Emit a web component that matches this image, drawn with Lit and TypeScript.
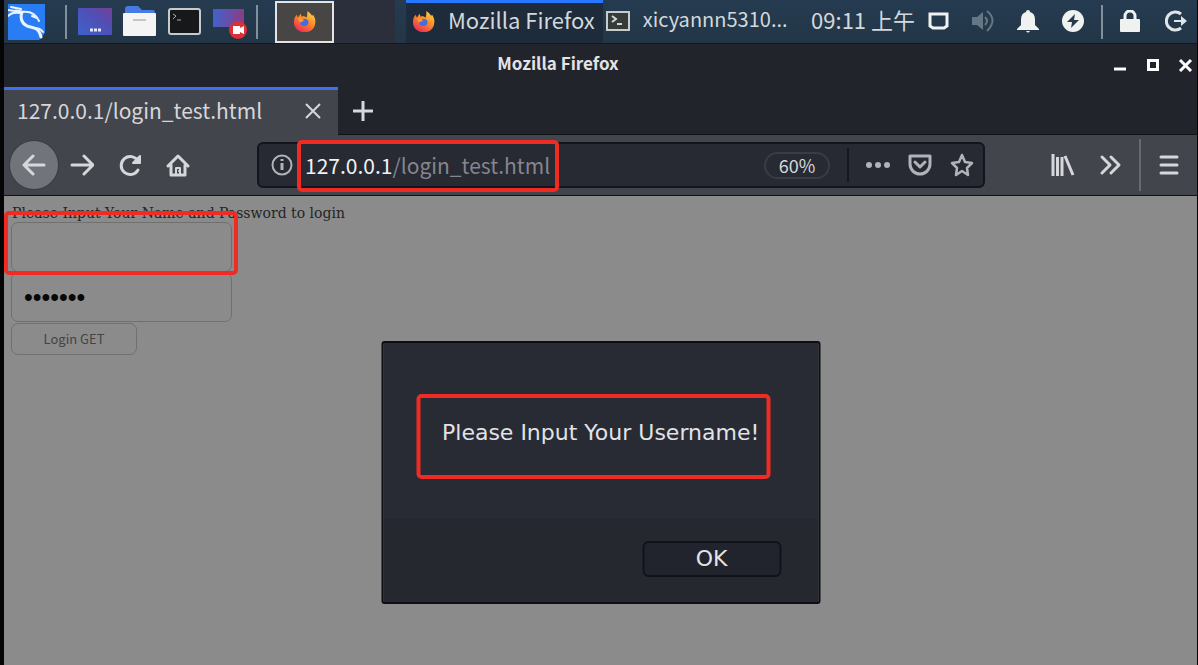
import { LitElement, html, css, svg } from "lit";
import { customElement } from "lit/decorators.js";

const firefoxLogo = html`<svg class="firefox" viewBox="0 0 24 24" aria-hidden="true">
  <defs>
    <linearGradient id="fx" x1=".85" y1="0" x2=".2" y2="1">
      <stop offset="0" stop-color="#ffd94a" /><stop offset=".45" stop-color="#ff8a26" />
      <stop offset="1" stop-color="#e8265c" />
    </linearGradient>
  </defs>
  <path fill="url(#fx)" d="M15 1c4 3 4 4 5 5l1-1c2 3 3 6 2 10-1 5-5 8-11 8C6 23 1 19 1 13c0-4 1-6 3-8l1 3 3-4 1 3c2-1 4 0 5 1 1-2 1-4 1-7z" />
  <path fill="#3f6fe0" d="M8 10c2 0 3-1 5-1 3 1 4 3 3 5-1 3-6 4-8 1-1-2-1-3 0-5z" />
  <path fill="#ff9a33" d="M5 8c2 0 4 1 7 3-2 0-2 2-5 2z" />
</svg>`;

const stroked = (paths: unknown, box = 24) => html`<svg class="icon" viewBox="0 0 ${box} ${box}"
  fill="none" stroke="currentColor" stroke-width="3" stroke-linecap="round" stroke-linejoin="round"
  aria-hidden="true">${paths}</svg>`;

@customElement("desktop-panel")
export class DesktopPanel extends LitElement {
  static styles = css`
    :host { display: block; }
    .panel {
      display: flex; align-items: center; justify-content: space-between; height: 43px;
      background: linear-gradient(#253b50, #233647);
      border-bottom: 1px solid #15171d;
      font: 22px/32px "Noto Sans CJK SC", sans-serif; color: #d3d8dc;
    }
    .launchers, .tray, .quick { display: flex; align-items: center; }
    .launchers { padding-left: 4px; }
    .quick { gap: 11px; margin: 0 9px 0 11px; }
    button { border: 0; padding: 0; background: none; color: inherit; font: inherit; display: flex; align-items: center; }
    .kali { width: 38px; height: 38px; margin-right: 19px; }
    .launch { width: 34px; height: 34px; }
    .rule { width: 2px; height: 34px; background: #81909b; }
    .active {
      width: 59px; height: 42px; margin-left: 17px; justify-content: center;
      background: #484644; border: 2px solid #e5e3e6; box-sizing: border-box;
    }
    .active + .spare { width: 61px; height: 43px; margin-right: 11px; background: #2b2e3b; }
    .firefox { width: 23px; height: 23px; flex: none; }
    .task { height: 43px; gap: 13px; padding: 0 8px 0 6px; box-sizing: border-box; white-space: nowrap; }
    .current { background: #1d2b3a; box-shadow: inset 0 3px #2777ff; }
    .idle { padding: 0 0 0 3px; font-size: 20px; }
    .task span, .clock { padding-bottom: 6px; }
    .term { width: 24px; height: 22px; }
    .tray { gap: 23px; padding-right: 10px; color: #f0f2f2; }
    .clock { color: #d3d8dc; margin-right: -11px; white-space: nowrap; }
    .tray svg { width: 22px; height: 24px; display: block; }
    .tray .rule { margin: 0 -6px; }
    .muted { color: #657785; }
  `;

  render() {
    return html`<nav class="panel" aria-label="Panel">
      <div class="launchers">
        <button aria-label="Applications">
          <svg class="kali" viewBox="0 0 38 38">
            <path fill="#287cf4" d="M0 1h37v29l-6 7H0z" />
            <g fill="none" stroke="#e9f3ff" stroke-linecap="round" stroke-linejoin="round">
              <path stroke-width="2" d="M3 4l10 2M0 7l7 1M0 13c3-3 7-4 12-3" />
              <path stroke-width="3" d="M8 8l6 1c-2 5-1 11 5 14 6 2 12 1 14 11" />
              <path stroke-width="2" d="M14 9c8-1 14 2 17 9M24 13l5 2M26 25c4 0 7 1 9 4" />
            </g>
          </svg>
        </button>
        <span class="rule"></span>
        <div class="quick">
          <button aria-label="Show desktop">
            <svg class="launch" viewBox="0 0 34 34">
              <defs><linearGradient id="dk" x1="0" y1="1" x2="1" y2="0"><stop stop-color="#3d62cc" /><stop offset=".6" stop-color="#514fb4" /><stop offset="1" stop-color="#75409a" /></linearGradient></defs>
              <rect y="3" width="34" height="27" rx="1" fill="url(#dk)" />
              <path d="M12 25h3M16 25h3M20 25h3" stroke="#e4e9ff" stroke-width="3" />
            </svg>
          </button>
          <button aria-label="Files">
            <svg class="launch" viewBox="0 0 34 34">
              <path fill="#467be4" d="M2 4q0-3 3-3h10l4 4h11q2 0 2 3v10H2z" />
              <rect y="8" width="33" height="23" rx="1" fill="#f4f4f5" />
              <path d="M10 15h13" stroke="#c5c5c7" stroke-width="2" />
            </svg>
          </button>
          <button aria-label="Terminal">
            <svg class="launch" viewBox="0 0 34 34">
              <rect x="1" y="4" width="31" height="25" rx="2" fill="#171819" stroke="#c5ccd1" stroke-width="2" />
              <path d="M5 9l3 2-3 3M9 15h4" fill="none" stroke="#a9adb0" />
            </svg>
          </button>
          <button aria-label="Screen recorder">
            <svg class="launch" viewBox="0 0 34 34">
              <defs><linearGradient id="rc"><stop stop-color="#4162cb" /><stop offset="1" stop-color="#8b3c85" /></linearGradient></defs>
              <path d="M0 4h31v18H0z" fill="url(#rc)" />
              <circle cx="25" cy="25" r="9" fill="#dc3036" />
              <path d="M20 21h7v2l4-2v8l-4-2v2h-7z" fill="#fff" />
            </svg>
          </button>
        </div>
        <span class="rule"></span>
        <button class="active" aria-label="Firefox">${firefoxLogo}</button>
        <span class="spare"></span>
        <button class="task current">${firefoxLogo}<span>Mozilla Firefox</span></button>
        <button class="task idle">
          <svg class="term" viewBox="0 0 24 22">
            <rect x="1" y="1" width="22" height="18" fill="#353c39" stroke="#c8ccca" stroke-width="2" />
            <path d="M6 5l4 3-4 3M11 13h5" fill="none" stroke="#d4d8d5" stroke-width="2" />
          </svg>
          <span>xicyannn5310...</span>
        </button>
      </div>
      <div class="tray">
        <time class="clock">09:11 上午</time>
        <button aria-label="Display">
          <svg viewBox="0 0 22 24"><path d="M3 4h17v12l-3 2H6l-3-2z" fill="none" stroke="currentColor" stroke-width="3" /></svg>
        </button>
        <button class="muted" aria-label="Volume">
          <svg viewBox="0 0 22 24"><path d="M0 7h5l6-5v18l-6-5H0z" fill="currentColor" /><path d="M13 7q4 4 0 8M15 1q11 9 0 20" fill="none" stroke="currentColor" stroke-width="2" /></svg>
        </button>
        <button aria-label="Notifications">
          <svg viewBox="0 0 22 24"><path d="M9 2q0-2 2-2t2 2q5 1 5 8v5l4 4v1H0v-1l4-4v-5q0-7 5-8zM9 21h4q-2 3-4 0z" fill="currentColor" /></svg>
        </button>
        <button aria-label="Power">
          <svg viewBox="0 0 22 24"><circle cx="11" cy="11" r="11" fill="currentColor" /><path d="M13 4l-8 8h5l-1 6 8-8h-5z" fill="#253b50" /></svg>
        </button>
        <span class="rule"></span>
        <button aria-label="Lock">
          <svg viewBox="0 0 22 24"><path d="M5 10V6a5 5 0 0 1 10 0v4" fill="none" stroke="currentColor" stroke-width="3" /><rect y="9" width="20" height="13" rx="1" fill="currentColor" /></svg>
        </button>
        <button aria-label="Log out">
          <svg viewBox="0 0 22 24"><path d="M16 4a9 9 0 1 0 0 14" fill="none" stroke="#dfe5e6" stroke-width="3" /><path d="M9 10h7V6l6 5-6 5v-4H9z" fill="#dfe5e6" /></svg>
        </button>
      </div>
    </nav>`;
  }
}

@customElement("browser-chrome")
export class BrowserChrome extends LitElement {
  static styles = css`
    :host { display: block; font-family: "Noto Sans CJK SC", sans-serif; color: #d5d7db; background: #22242c; }
    button { border: 0; padding: 0; margin: 0; background: none; color: inherit; font: inherit; display: grid; place-items: center; flex: none; }
    .title { display: flex; align-items: center; height: 43px; padding-right: 4px; }
    .title h1 { flex: 1; margin: 0; padding-bottom: 6px; text-align: center; font-size: 17px; line-height: 24px; font-weight: 700; color: #e2e3e5; }
    .controls { display: flex; gap: 18px; padding-bottom: 2px; color: #fff; }
    .controls svg { width: 15px; height: 15px; display: block; }
    .tabs { display: flex; height: 48px; box-sizing: border-box; }
    .tab {
      display: flex; align-items: center; justify-content: space-between; width: 334px; box-sizing: border-box;
      padding: 0 17px 0 13px; background: #43454d; border-top: 3px solid #3c72f2;
      font-size: 21px; line-height: 32px;
    }
    .tab span { padding-bottom: 6px; }
    .tab button { padding-bottom: 3px; }
    .tab svg { width: 16px; height: 16px; display: block; }
    .rest { flex: 1; display: flex; align-items: center; padding-left: 14px; border-bottom: 1px solid #101218; }
    .rest svg { width: 22px; height: 22px; display: block; }
    .bar {
      display: flex; align-items: center; height: 61px; box-sizing: border-box; padding: 0 16px 0 6px;
      background: #43454d; border-bottom: 1px solid #111216;
    }
    .nav { display: flex; align-items: center; gap: 24px; }
    .icon { width: 24px; height: 24px; display: block; }
    .back { width: 48px; height: 48px; border-radius: 50%; background: #72747b; margin-right: -12px; box-shadow: 0 0 0 1px #3a3c43; }
    .address {
      flex: 1; display: flex; align-items: center; height: 46px; box-sizing: border-box; min-width: 0;
      margin: 0 66px 0 67px; padding: 0 9px 0 12px;
      background: #272933; border: 2px solid #12141e; border-radius: 6px; color: #b1b3b9;
    }
    .info { width: 22px; height: 22px; }
    .where { position: relative; flex: 1; padding-left: 12px; font-size: 21px; line-height: 32px; white-space: nowrap; }
    .host { color: #f1f2f4; }
    .path { color: #85868e; }
    .mark { position: absolute; left: 4px; top: -9px; width: 262px; height: 52px; box-sizing: border-box; border: 4px solid #ef2b24; border-radius: 5px; pointer-events: none; }
    .zoom { width: 66px; height: 27px; box-sizing: border-box; border: 2px solid #3a3c45; border-radius: 14px; font-size: 18px; line-height: 22px; color: #d5d7db; }
    .split { width: 2px; height: 34px; margin: 0 17px; background: #151720; }
    .actions { display: flex; gap: 18px; }
    .tools { display: flex; align-items: center; gap: 24px; }
    .tools .line { width: 2px; height: 52px; margin: 0 -8px; background: #686a71; }
  `;

  render() {
    return html`
      <header class="title">
        <h1>Mozilla Firefox</h1>
        <div class="controls">
          <button aria-label="Minimize"><svg viewBox="0 0 15 15"><path d="M2 12h12" stroke="currentColor" stroke-width="3" /></svg></button>
          <button aria-label="Maximize"><svg viewBox="0 0 15 15"><path d="M3.500 3.500h9v9h-9z" fill="none" stroke="currentColor" stroke-width="3" /></svg></button>
          <button aria-label="Close"><svg viewBox="0 0 15 15"><path d="M2 3l11 11M13 3L2 14" stroke="currentColor" stroke-width="3" /></svg></button>
        </div>
      </header>
      <div class="tabs">
        <div class="tab"><span>127.0.0.1/login_test.html</span>
          <button aria-label="Close tab"><svg viewBox="0 0 16 16"><path d="M1 1l14 14M15 1L1 15" stroke="currentColor" stroke-width="2" /></svg></button>
        </div>
        <div class="rest"><button aria-label="New tab"><svg viewBox="0 0 22 22"><path d="M11 1v20M1 11h20" stroke="currentColor" stroke-width="3" /></svg></button></div>
      </div>
      <div class="bar">
        <div class="nav">
          <button class="back" aria-label="Back">${stroked(svg`<path d="M22 12H2M11 3l-9 9 9 9" />`)}</button>
          <button aria-label="Forward">${stroked(svg`<path d="M2 12h21M14 3l9 9-9 9" />`)}</button>
          <button aria-label="Reload">${stroked(svg`<path d="M20 17a9 9 0 1 1 0-9" /><path d="M22 3v7h-7z" fill="currentColor" stroke-width="2" />`)}</button>
          <button aria-label="Home">${stroked(svg`<path d="M2 13L12 3l10 10M5 12v10h14V12" /><path d="M10 21v-6h4v6" stroke-width="2" /><path d="M13 18h1" stroke-width="2" />`)}</button>
        </div>
        <div class="address">
          <svg class="info" viewBox="0 0 22 22" aria-hidden="true"><circle cx="11" cy="11" r="9.500" fill="none" stroke="currentColor" stroke-width="2" /><path d="M11 9v7M11 5v2" stroke="currentColor" stroke-width="3" /></svg>
          <div class="where"><span class="host">127.0.0.1</span><span class="path">/login_test.html</span><span class="mark"></span></div>
          <button class="zoom">60%</button>
          <span class="split"></span>
          <div class="actions">
            <button aria-label="Page actions"><svg class="icon" viewBox="0 0 24 24" fill="currentColor"><circle cx="3" cy="12" r="3" /><circle cx="12" cy="12" r="3" /><circle cx="21" cy="12" r="3" /></svg></button>
            <button aria-label="Save to Pocket">${stroked(svg`<path d="M2 3h20v8a10 10 0 0 1-20 0zM7 9l5 5 5-5" />`)}</button>
            <button aria-label="Bookmark">${stroked(svg`<path stroke-width="2.500" d="M12 2l3 7 7 1-5 5 1 7-6-4-6 4 1-7-5-5 7-1z" />`)}</button>
          </div>
        </div>
        <div class="tools">
          <button aria-label="Library"><svg class="icon" viewBox="0 0 24 24" fill="none" stroke="currentColor" stroke-width="3"><path d="M2 1v22M6.500 4v19M11 4v19M14 3l8 19" /></svg></button>
          <button aria-label="More tools">${stroked(svg`<path d="M3 4l8 8-8 8M12 4l8 8-8 8" />`)}</button>
          <span class="line"></span>
          <button aria-label="Menu">${stroked(svg`<path d="M4 4h16M4 12h16M4 20h16" />`)}</button>
        </div>
      </div>`;
  }
}

@customElement("login-page")
export class LoginPage extends LitElement {
  static styles = css`
    :host { display: block; position: relative; flex: 1; background: #8b8b8b; }
    form { display: flex; flex-direction: column; align-items: flex-start; padding: 8px 7px; }
    p { margin: 0; padding-left: 1px; font: 14px/18px "DejaVu Serif", serif; color: #242424; white-space: nowrap; }
    .field { position: relative; display: flex; }
    input {
      width: 221px; height: 50px; box-sizing: border-box; padding: 0 12px; margin: 0;
      border: 1px solid #707070; border-radius: 7px; background: transparent; color: #080808;
      font: 25px/30px "Liberation Sans", sans-serif; outline: 0;
    }
    .mark { position: absolute; border: 4px solid #ef2b24; border-radius: 5px; box-sizing: border-box; pointer-events: none; }
    .field .mark { left: -7px; top: -11px; right: -6px; height: 64px; }
    .login {
      width: 126px; height: 32px; margin-top: 1px; border: 1px solid #707070; border-radius: 7px; background: transparent;
      font: 13px/20px "Noto Sans CJK SC", sans-serif; color: #444; padding: 0;
    }
    .dialog {
      position: absolute; left: 50%; top: 145px; transform: translateX(-50%);
      width: 439px; box-sizing: border-box; border: 2px solid #0c0e13; border-radius: 3px;
      background: linear-gradient(#282a34 68%, #25282f 68%);
      color: #e1e3e6; font: 22px/28px "DejaVu Sans", sans-serif;
      padding: 51px 37px 25px 33px;
    }
    .message { position: relative; padding: 25px 0 32px 26px; white-space: nowrap; }
    .dialog .mark { left: 0; top: 0; width: 354px; bottom: 0; }
    .ok {
      display: block; margin: 62px 0 0 auto; width: 139px; height: 36px; padding: 0;
      background: #22242d; border: 2px solid #11131a; border-radius: 6px; color: inherit; font: inherit;
    }
  `;

  render() {
    return html`
      <form @submit=${(e: Event) => e.preventDefault()}>
        <p>Please Input Your Name and Password to login</p>
        <div class="field"><input type="text" aria-label="Name" /><span class="mark"></span></div>
        <input type="password" aria-label="Password" value="1234567" />
        <button class="login">Login GET</button>
      </form>
      <section class="dialog" role="alertdialog" aria-label="Alert">
        <div class="message">Please Input Your Username!<span class="mark"></span></div>
        <button class="ok">OK</button>
      </section>`;
  }
}

@customElement("app-root")
export class AppRoot extends LitElement {
  static styles = css`
    :host { display: flex; flex-direction: column; min-height: 100vh; box-sizing: border-box; background: #050506; padding: 0 1px 0 4px; }
  `;

  render() {
    return html`<desktop-panel></desktop-panel><browser-chrome></browser-chrome><login-page></login-page>`;
  }
}
